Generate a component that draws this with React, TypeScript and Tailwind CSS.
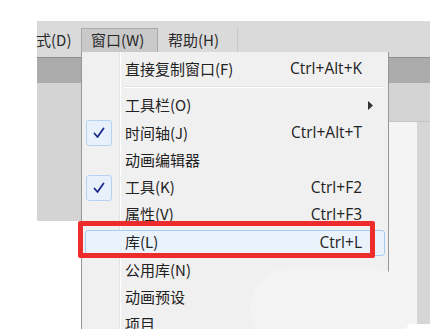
import React from "react";

const cjk = { fontFamily: '"Noto Sans CJK SC", "Noto Sans", sans-serif' };
const lat = { fontFamily: '"Open Sans", "Noto Sans", sans-serif' };

function Check() {
  return (
    <div className="ml-[4px] flex h-[26px] w-[26px] items-center justify-center rounded-[3px] border border-[#b6d2f2] bg-[#e8f1fb]">
      <svg width="12" height="12" viewBox="0 0 12 12">
        <path d="M1.5 6.5 L4.5 10 L10.5 1.5" fill="none" stroke="#1a2a8c" strokeWidth="1.8" strokeLinecap="round" strokeLinejoin="round" />
      </svg>
    </div>
  );
}

type Item = { label: string; sc?: string; check?: boolean; arrow?: boolean; h: number; hl?: boolean };

const items: Item[] = [
  { label: "工具栏(O)", arrow: true, h: 28 },
  { label: "时间轴(J)", sc: "Ctrl+Alt+T", check: true, h: 28 },
  { label: "动画编辑器", h: 27 },
  { label: "工具(K)", sc: "Ctrl+F2", check: true, h: 27 },
  { label: "属性(V)", sc: "Ctrl+F3", h: 27 },
  { label: "库(L)", sc: "Ctrl+L", h: 29, hl: true },
  { label: "公用库(N)", h: 27 },
  { label: "动画预设", h: 27 },
  { label: "项目", h: 27 },
];

function Row({ it }: { it: Item }) {
  return (
    <div className="relative flex items-center" style={{ height: it.h }}>
      {it.hl && (
        <div className="absolute left-[3px] right-[3px] top-[2px] bottom-[1px] rounded-[3px] border border-[#a8cbf0] bg-[#eaf2fb]" />
      )}
      <div className="relative flex h-full w-[38px] items-center">{it.check && <Check />}</div>
      <div className="relative pl-[5px] text-[15px] text-[#222]" style={cjk}>
        {it.label}
      </div>
      <div className="flex-1" />
      {it.sc && (
        <div className="relative pr-[26px] text-[15.5px] text-[#222]" style={lat}>
          {it.sc}
        </div>
      )}
      {it.arrow && (
        <div className="relative pr-[14px]">
          <svg width="6" height="9" viewBox="0 0 6 9">
            <path d="M0 0 L5 4.5 L0 9 Z" fill="#333" />
          </svg>
        </div>
      )}
    </div>
  );
}

export default function App() {
  return (
    <div className="relative h-[329px] w-[439px] overflow-hidden bg-white">
      <div className="h-[21px]" />
      <div className="ml-[37px] w-[393px]">
        <div className="flex h-[31px] items-end bg-[#dadada]">
          <div className="flex h-[24px] w-[44px] items-center text-[15px] text-[#2a2a2a]" style={cjk}>
            <span className="-ml-[1px]">式(D)</span>
          </div>
          <div className="flex h-[24px] w-[77px] items-center border-x border-t border-[#a9a9a9] bg-[#c9c9c9] pl-[9px] text-[15px] text-[#2a2a2a]" style={cjk}>
            窗口(W)
          </div>
          <div className="flex h-[24px] w-[79px] items-center pl-[10px] text-[15px] text-[#2a2a2a]" style={cjk}>
            帮助(H)
          </div>
          <div className="h-[24px] w-px bg-[#c8c8c8]" />
        </div>
        <div className="h-[5px] bg-[#dadada]" />
        <div className="h-[26px] border-t border-[#8e8e8e] bg-[#ababab]" />
        <div className="flex">
          <div className="h-[138px] w-[44px] bg-[#d4d4d4]" />
        </div>
      </div>
      <div className="absolute left-[389px] top-[83px] h-[39px] w-[41px] border-b border-[#c4c4c4] bg-[#d4d4d4]" />
      <div className="absolute left-[389px] top-[122px] h-[202px] w-[41px] bg-[#f4f4f4]" />
      <div className="absolute left-[417px] top-[122px] h-[202px] w-[13px] bg-[#d6d6d6]" />

      <div className="absolute left-[81px] top-[52px] w-[308px] border border-t-0 border-[#979797] bg-[#f0f0f0]">
        <div className="absolute bottom-0 left-[37px] top-0 w-px bg-[#e2e3e3]" />
        <div className="absolute bottom-0 left-[38px] top-0 w-px bg-white" />
        <div className="h-[3px]" />
        <Row it={{ label: "直接复制窗口(F)", sc: "Ctrl+Alt+K", h: 28 }} />
        <div className="flex h-[8px] items-center">
          <div className="ml-[42px] mr-[4px] flex-1">
            <div className="h-px bg-[#e2e3e3]" />
            <div className="h-px bg-white" />
          </div>
        </div>
        {items.map((it) => (
          <Row key={it.label} it={it} />
        ))}
      </div>

      <div className="absolute left-[78px] top-[221px] h-[37px] w-[297px] rounded-[2px] border-[5px] border-[#ee2c2c]" />

      <div className="absolute left-[250px] top-[268px] h-[80px] w-[162px] rounded-[40px] bg-[#f3f3f3]" />
    </div>
  );
}
